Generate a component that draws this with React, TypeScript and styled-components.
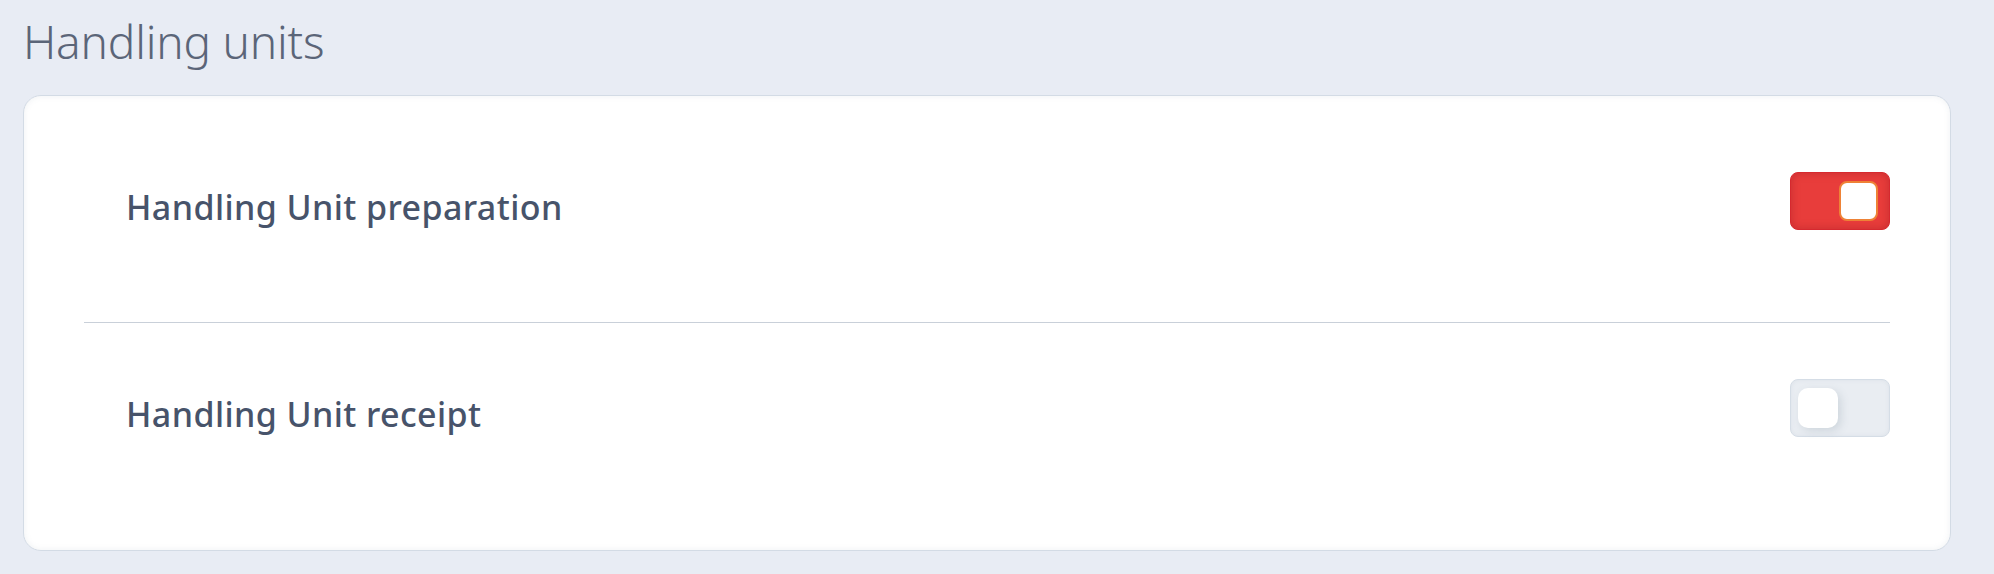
import React, { useState } from 'react';
import styled, { createGlobalStyle } from 'styled-components';

const GlobalStyle = createGlobalStyle`
  html, body {
    margin: 0;
    background: #e8ecf4;
    font-family: 'Noto Sans', 'Open Sans', sans-serif;
  }
`;

interface IToggleFC {
  on: boolean;
  onToggle: () => void;
}

const Toggle: React.FC<IToggleFC> = ({ on, onToggle }) => (
  <Track type="button" role="switch" aria-checked={on} $on={on} onClick={onToggle}>
    <Knob $on={on} />
  </Track>
);

const App: React.FC = () => {
  const [prep, setPrep] = useState(true);
  const [receipt, setReceipt] = useState(false);

  return (
    <Root>
      <GlobalStyle />
      <Title>Handling units</Title>
      <Card>
        <Row>
          <Label>Handling Unit preparation</Label>
          <Toggle on={prep} onToggle={() => setPrep(!prep)} />
        </Row>
        <Divider />
        <Row>
          <Label>Handling Unit receipt</Label>
          <Toggle on={receipt} onToggle={() => setReceipt(!receipt)} />
        </Row>
      </Card>
    </Root>
  );
};

export default App;

const Root = styled.div`
  padding: 0 43px 0 23px;
`;

const Title = styled.h1`
  margin: 14px 0 26px;
  color: #5b6578;
  font-size: 46px;
  font-weight: 300;
  line-height: 55px;
  letter-spacing: -0.2px;
`;

const Card = styled.section`
  background: #fff;
  border: 1px solid #d3dbe5;
  border-radius: 18px;
  box-shadow: inset 0 0 6px rgba(120, 140, 160, 0.12);
  padding: 40px 60px 77px;
`;

const Row = styled.div`
  display: flex;
  align-items: center;
  justify-content: space-between;
  height: 130px;
  padding-left: 42px;
`;

const Label = styled.span`
  margin-top: 11px;
  color: #47536a;
  font-size: 34px;
  font-weight: 500;
  letter-spacing: 0.4px;
`;

const Divider = styled.hr`
  margin: 56px 0 20px;
  border: 0;
  height: 1px;
  background: #c9d0d9;
`;

const Track = styled.button<{ $on: boolean }>`
  display: flex;
  align-items: center;
  justify-content: ${({ $on }) => ($on ? 'flex-end' : 'flex-start')};
  box-sizing: border-box;
  width: 100px;
  height: 58px;
  padding: 0 ${({ $on }) => ($on ? '11px' : '7px')};
  border-radius: 8px;
  cursor: pointer;
  border: ${({ $on }) => ($on ? '1px solid #d6292f' : '1.5px solid #d5dde6')};
  background: ${({ $on }) => ($on ? '#e83d3b' : '#e9edf2')};
  box-shadow: ${({ $on }) =>
    $on ? 'inset 0 0 8px rgba(150, 20, 30, 0.4)' : 'inset 0 0 4px rgba(120, 140, 160, 0.1)'};
`;

const Knob = styled.span<{ $on: boolean }>`
  box-sizing: border-box;
  width: ${({ $on }) => ($on ? '39px' : '40px')};
  height: 40px;
  background: #fff;
  border-radius: ${({ $on }) => ($on ? '8px' : '10px')};
  border: ${({ $on }) => ($on ? '2px solid #ee8236' : '0')};
  box-shadow: ${({ $on }) => ($on ? 'none' : '3px 3px 8px rgba(90, 110, 130, 0.18)')};
`;
